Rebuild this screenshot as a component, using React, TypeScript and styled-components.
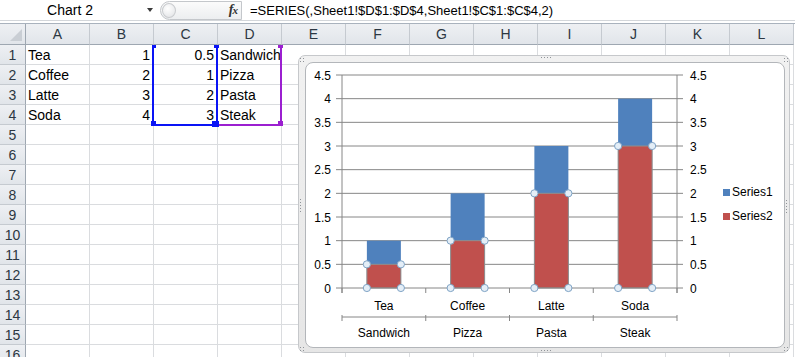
import React from "react";
import styled, { createGlobalStyle, css } from "styled-components";

const GlobalStyle = createGlobalStyle`
  html, body {
    margin: 0;
    padding: 0;
    background: #ffffff;
    overflow: hidden;
  }
  body {
    font-family: "Liberation Sans", Arial, sans-serif;
  }
`;

const Page = styled.div`
  position: relative;
  width: 795px;
  height: 357px;
  overflow: hidden;
  background: #fff;
`;

/* ---------- formula bar ---------- */

const FormulaBar = styled.div`
  display: flex;
  align-items: center;
  height: 21px;
  box-sizing: border-box;
  border-bottom: 1px solid #d3d6da;
  margin-bottom: 2px;
  font-size: 14px;
  color: #000;
`;

const NameBox = styled.div`
  width: 140px;
  text-align: center;
`;

const DropArrow = styled.div`
  width: 20px;
  display: flex;
  justify-content: center;
  &::after {
    content: "";
    border-left: 3.5px solid transparent;
    border-right: 3.5px solid transparent;
    border-top: 4px solid #3a3a3a;
  }
`;

const Pill = styled.div`
  display: flex;
  align-items: center;
  justify-content: space-between;
  width: 82px;
  height: 19px;
  box-sizing: border-box;
  border: 1px solid #c4c7cb;
  border-radius: 10px 0 0 10px;
  background: linear-gradient(#fbfbfb, #eceef0);
  padding: 0 2px 0 1px;
`;

const Knob = styled.div`
  width: 14px;
  height: 15px;
  box-sizing: border-box;
  border-radius: 50%;
  border: 1px solid #c9cbce;
  background: radial-gradient(circle at 40% 35%, #ffffff, #dfe1e4);
`;

const Fx = styled.span`
  font-family: "Liberation Serif", "Times New Roman", serif;
  font-style: italic;
  font-weight: bold;
  font-size: 14px;
  color: #333;
  letter-spacing: -1px;
  padding-right: 2px;
  & small {
    font-size: 11px;
  }
`;

const FormulaText = styled.div`
  padding-left: 8px;
  font-size: 13px;
  white-space: nowrap;
`;

/* ---------- sheet ---------- */

const Sheet = styled.div`
  position: relative;
  display: grid;
  grid-template-columns: 26px repeat(12, 64px);
  grid-template-rows: 21px;
  grid-auto-rows: 20px;
  border-top: 1px solid #a9b2bd;
  font-size: 14px;
`;

const HeaderBase = styled.div`
  box-sizing: border-box;
  background: linear-gradient(#eef0f3, #e1e5ea);
  color: #2c3742;
  display: flex;
  align-items: center;
  justify-content: center;
`;

const Corner = styled(HeaderBase)`
  position: relative;
  border-right: 1px solid #9ea7b1;
  border-bottom: 1px solid #9ea7b1;
  &::after {
    content: "";
    position: absolute;
    right: 3px;
    bottom: 3px;
    width: 12px;
    height: 12px;
    background: #c9ced4;
    clip-path: polygon(100% 0, 100% 100%, 0 100%);
  }
`;

const ColHeader = styled(HeaderBase)`
  border-right: 1px solid #c5cad0;
  border-bottom: 1px solid #9ea7b1;
`;

const RowHeader = styled(HeaderBase)`
  border-right: 1px solid #9ea7b1;
  border-bottom: 1px solid #c5cad0;
`;

const Cell = styled.div<{ $align?: "left" | "right" }>`
  box-sizing: border-box;
  border-right: 1px solid #dadcdf;
  border-bottom: 1px solid #dadcdf;
  padding: 0 3px 0 2px;
  display: flex;
  align-items: center;
  justify-content: ${(p) => (p.$align === "right" ? "flex-end" : "flex-start")};
  white-space: nowrap;
  color: #000;
`;

/* highlighted reference ranges: columns C and D, rows 1 to 4 */
const Range = styled.div<{ $col: number; $color: string }>`
  position: absolute;
  left: ${(p) => 24 + p.$col * 64}px;
  top: 21px;
  width: 66px;
  height: 81px;
  box-sizing: border-box;
  border: 2px solid ${(p) => p.$color};
  border-top: none;
  pointer-events: none;
`;

type Corner = "tl" | "tr" | "bl" | "br";

const cornerCss = {
  tl: css`top: 0; left: -2px; width: 4px; height: 3px;`,
  tr: css`top: 0; right: -3px; width: 5px; height: 3px;`,
  bl: css`bottom: -2px; left: -3px; width: 5px; height: 5px;`,
  br: css`bottom: -2px; right: -3px; width: 5px; height: 5px;`,
};

const Handle = styled.span<{ $at: Corner; $color: string; $big?: boolean }>`
  position: absolute;
  background: ${(p) => p.$color};
  ${(p) => cornerCss[p.$at]}
  ${(p) => p.$big && css`width: 7px; height: 6px; bottom: -3px;`}
`;

/* ---------- chart ---------- */

const ChartFrame = styled.div`
  position: absolute;
  left: 298px;
  top: 55px;
  width: 492px;
  height: 298px;
  box-sizing: border-box;
  border: 1px solid #c6c8cb;
  border-radius: 7px;
  background: linear-gradient(#f1f1f1, #e6e6e6);
  padding: 6px 4px 4px 6px;
`;

const ChartPanel = styled.div`
  width: 480px;
  height: 286px;
  box-sizing: border-box;
  border: 1px solid #b3b6ba;
  border-radius: 8px;
  background: #fff;
  overflow: hidden;
  & svg {
    display: block;
  }
`;

type GripPlace = "tl" | "t" | "tr" | "l" | "r" | "bl" | "b" | "br";

const gripCss: Record<GripPlace, ReturnType<typeof css>> = {
  tl: css`top: 1px; left: 0; width: 6px; height: 6px;`,
  t: css`top: 0; left: 241px; width: 13px; height: 4px;`,
  tr: css`top: 1px; right: 0; width: 6px; height: 6px;`,
  l: css`top: 142px; left: 0; width: 4px; height: 14px;`,
  r: css`top: 143px; right: 0; width: 4px; height: 14px;`,
  bl: css`bottom: 0; left: 0; width: 6px; height: 6px;`,
  b: css`bottom: -1px; left: 241px; width: 13px; height: 4px;`,
  br: css`bottom: 0; right: 0; width: 6px; height: 6px;`,
};

const Grip = styled.span<{ $at: GripPlace }>`
  position: absolute;
  ${(p) => gripCss[p.$at]}
  background-image: radial-gradient(circle, #8f9398 0.8px, transparent 1px);
  background-size: 3px 3px;
`;

const BLUE = "#4f81bd";
const RED = "#c0504d";
const GRID = "#868686";

const data = [
  { a: "Tea", d: "Sandwich", b: 1, c: 0.5 },
  { a: "Coffee", d: "Pizza", b: 2, c: 1 },
  { a: "Latte", d: "Pasta", b: 3, c: 2 },
  { a: "Soda", d: "Steak", b: 4, c: 3 },
];

const X0 = 342;
const X1 = 677;
const Y0 = 288;
const UNIT = (288 - 75) / 4.5;
const CAT = (X1 - X0) / 4;
const BAR = 34;
const yOf = (v: number) => Y0 - v * UNIT;
const ticks = [0, 0.5, 1, 1.5, 2, 2.5, 3, 3.5, 4, 4.5];

const Marker = ({ cx, cy }: { cx: number; cy: number }) => (
  <circle cx={cx} cy={cy} r={3.6} fill="#e4eef7" stroke="#7fa3c5" strokeWidth={1} />
);

const ChartSvg = () => (
  <svg width={478} height={284} viewBox="306 63 478 284" fontFamily="Liberation Sans, Arial, sans-serif" fontSize={12}>
    {/* gridlines */}
    {ticks.slice(1).map((t) => (
      <line key={t} x1={X0} x2={X1} y1={yOf(t)} y2={yOf(t)} stroke={GRID} strokeWidth={1} />
    ))}
    {/* bars */}
    {data.map((r, i) => {
      const cx = X0 + CAT * (i + 0.5);
      const x = cx - BAR / 2;
      return (
        <g key={r.a}>
          <rect x={x} y={yOf(r.b)} width={BAR} height={r.b * UNIT} fill={BLUE} />
          <rect x={x} y={yOf(r.c)} width={BAR} height={r.c * UNIT} fill={RED} stroke="#8f8f8f" strokeWidth={1} />
        </g>
      );
    })}
    {/* axes */}
    <line x1={X0} x2={X0} y1={yOf(4.5)} y2={Y0 + 5} stroke={GRID} />
    <line x1={X1} x2={X1} y1={yOf(4.5)} y2={Y0 + 5} stroke={GRID} />
    <line x1={X0} x2={X1} y1={Y0} y2={Y0} stroke={GRID} />
    {ticks.map((t) => (
      <g key={t}>
        <line x1={X0 - 6} x2={X0} y1={yOf(t)} y2={yOf(t)} stroke={GRID} />
        <line x1={X1} x2={X1 + 6} y1={yOf(t)} y2={yOf(t)} stroke={GRID} />
        <text x={331} y={yOf(t) + 4.5} textAnchor="end" fill="#000">
          {t}
        </text>
        <text x={690} y={yOf(t) + 4.5} fill="#000">
          {t}
        </text>
      </g>
    ))}
    {[0, 1, 2, 3, 4].map((k) => (
      <g key={k}>
        <line x1={X0 + CAT * k} x2={X0 + CAT * k} y1={Y0} y2={Y0 + 5} stroke={GRID} />
        <line x1={X0 + CAT * k} x2={X0 + CAT * k} y1={315} y2={321} stroke={GRID} />
      </g>
    ))}
    <line x1={X0} x2={X1} y1={317} y2={317} stroke={GRID} />
    {data.map((r, i) => {
      const cx = X0 + CAT * (i + 0.5);
      return (
        <g key={r.d}>
          <text x={cx} y={310} textAnchor="middle" fill="#000">
            {r.a}
          </text>
          <text x={cx} y={337} textAnchor="middle" fill="#000">
            {r.d}
          </text>
        </g>
      );
    })}
    {/* selection markers on Series2 */}
    {data.map((r, i) => {
      const cx = X0 + CAT * (i + 0.5);
      const l = cx - BAR / 2;
      const rt = cx + BAR / 2;
      return (
        <g key={"m" + r.a}>
          <Marker cx={l} cy={Y0} />
          <Marker cx={rt} cy={Y0} />
          <Marker cx={l} cy={yOf(r.c)} />
          <Marker cx={rt} cy={yOf(r.c)} />
        </g>
      );
    })}
    {/* legend */}
    <rect x={723} y={189} width={7} height={7} fill={BLUE} />
    <text x={732} y={196} fill="#000">Series1</text>
    <rect x={723} y={213} width={7} height={7} fill={RED} />
    <text x={732} y={220} fill="#000">Series2</text>
  </svg>
);

const COLS = ["A", "B", "C", "D", "E", "F", "G", "H", "I", "J", "K", "L"];
const ROWS = Array.from({ length: 16 }, (_, i) => i + 1);

const cellValue = (row: number, col: number): { text: string; align: "left" | "right" } | null => {
  const r = data[row - 1];
  if (!r) return null;
  if (col === 0) return { text: r.a, align: "left" };
  if (col === 1) return { text: String(r.b), align: "right" };
  if (col === 2) return { text: String(r.c), align: "right" };
  if (col === 3) return { text: r.d, align: "left" };
  return null;
};

const BLUE_SEL = "#0a14f5";
const PURPLE_SEL = "#9b1fd0";

export default function App() {
  return (
    <Page>
      <GlobalStyle />
      <FormulaBar>
        <NameBox>Chart 2</NameBox>
        <DropArrow />
        <Pill>
          <Knob />
          <Fx>
            f<small>x</small>
          </Fx>
        </Pill>
        <FormulaText>=SERIES(,Sheet1!$D$1:$D$4,Sheet1!$C$1:$C$4,2)</FormulaText>
      </FormulaBar>

      <Sheet>
        <Corner />
        {COLS.map((c) => (
          <ColHeader key={c}>{c}</ColHeader>
        ))}
        {ROWS.map((r) => (
          <React.Fragment key={r}>
            <RowHeader>{r}</RowHeader>
            {COLS.map((c, ci) => {
              const v = cellValue(r, ci);
              return (
                <Cell key={c} $align={v?.align}>
                  {v?.text}
                </Cell>
              );
            })}
          </React.Fragment>
        ))}

        <Range $col={3} $color={PURPLE_SEL}>
          <Handle $at="tr" $color={PURPLE_SEL} />
          <Handle $at="br" $color={PURPLE_SEL} />
        </Range>
        <Range $col={2} $color={BLUE_SEL}>
          <Handle $at="tl" $color={BLUE_SEL} />
          <Handle $at="tr" $color={BLUE_SEL} />
          <Handle $at="bl" $color={BLUE_SEL} />
          <Handle $at="br" $color={BLUE_SEL} $big />
        </Range>
      </Sheet>

      <ChartFrame>
        {(["tl", "t", "tr", "l", "r", "bl", "b", "br"] as GripPlace[]).map((g) => (
          <Grip key={g} $at={g} />
        ))}
        <ChartPanel>
          <ChartSvg />
        </ChartPanel>
      </ChartFrame>
    </Page>
  );
}
